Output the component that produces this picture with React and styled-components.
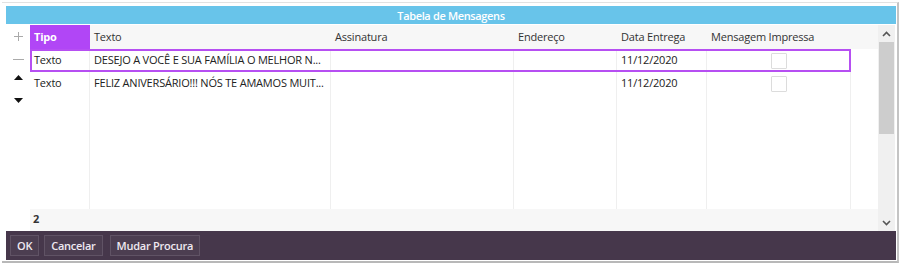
import React from 'react'
import styled, { createGlobalStyle } from 'styled-components'

const Global = createGlobalStyle`
  html, body { margin: 0; padding: 0; background: #fff; }
  body { font-family: "Open Sans", "Noto Sans", sans-serif; letter-spacing: -0.2px; }
`

const Page = styled.div`
  width: 900px;
  height: 266px;
  box-sizing: border-box;
  padding: 2px 1px 3px 2px;
`

const Frame = styled.div`
  height: 100%;
  box-sizing: border-box;
  border-top: 1px solid #e2e2e2;
  border-right: 2px solid #c4c4c4;
  border-bottom: 2px solid #b8b8b8;
  padding: 3px 1px 1px 4px;
  display: flex;
  flex-direction: column;
`

const Title = styled.div`
  height: 18px;
  background: #68c4ea;
  color: #fff;
  font-size: 11px;
  font-weight: 600;
  letter-spacing: -0.35px;
  display: flex;
  align-items: center;
  justify-content: center;
`

const Main = styled.div`
  flex: 1;
  display: flex;
  padding-top: 1px;
`

const Gutter = styled.div`
  width: 24px;
  display: flex;
  flex-direction: column;
  align-items: center;
`

const GutterBtn = styled.div`
  height: ${p => p.$h || 23}px;
  display: flex;
  align-items: center;
  justify-content: center;
`

const Table = styled.div`
  width: 848px;
  display: flex;
  flex-direction: column;
`

const cols = '60px 241px 183px 103px 90px 144px 27px'

const HeadRow = styled.div`
  display: grid;
  grid-template-columns: ${cols};
  height: 24px;
  background: #f7f7f7;
`

const HeadCell = styled.div`
  display: flex;
  align-items: center;
  padding-left: 4px;
  padding-bottom: 1px;
  font-size: 11px;
  color: ${p => p.$active ? '#fff' : '#333'};
  background: ${p => p.$active ? '#b146f6' : 'transparent'};
  font-weight: ${p => p.$active ? 700 : 400};
`

const Body = styled.div`
  flex: 1;
  position: relative;
  display: flex;
  flex-direction: column;
`

const Lines = styled.div`
  position: absolute;
  inset: 0;
  display: grid;
  grid-template-columns: ${cols};
  pointer-events: none;
`

const Line = styled.div`
  border-right: 1px solid #efefef;
  &:last-child { border-right: none; }
`

const Row = styled.div`
  position: relative;
  display: grid;
  grid-template-columns: ${cols};
  height: 23px;
`

const Outline = styled.div`
  position: absolute;
  left: 0;
  top: 0;
  width: 821px;
  height: 23px;
  box-sizing: border-box;
  border: 2px solid #b64ff2;
`

const Cell = styled.div`
  display: flex;
  align-items: center;
  justify-content: ${p => p.$center ? 'center' : 'flex-start'};
  padding-left: ${p => p.$center ? 0 : 4}px;
  padding-bottom: 2px;
  font-size: 11px;
  color: #222;
  white-space: nowrap;
  overflow: hidden;
`

const Check = styled.div`
  width: 14px;
  height: 14px;
  border: 1px solid #dcdcdc;
  border-radius: 1px;
  background: #fff;
  margin-top: 3px;
`

const Footer = styled.div`
  height: 22px;
  background: #f7f7f7;
  display: flex;
  align-items: center;
  padding-left: 3px;
  padding-bottom: 3px;
  box-sizing: border-box;
  font-size: 11px;
  font-weight: 700;
  color: #333;
`

const Scroll = styled.div`
  width: 17px;
  background: #f0f0f0;
  display: flex;
  flex-direction: column;
`

const Arrow = styled.div`
  height: 17px;
  display: flex;
  align-items: center;
  justify-content: center;
`

const Track = styled.div`
  flex: 1;
  padding: 0 1px;
`

const Thumb = styled.div`
  height: 92px;
  background: #cdcdcd;
`

const Bar = styled.div`
  height: 29px;
  background: #46374b;
  display: flex;
  align-items: center;
  gap: 5px;
  padding-left: 4px;
`

const Button = styled.div`
  height: 21px;
  padding: 0 6px;
  box-sizing: border-box;
  display: flex;
  align-items: center;
  background: #4c3e51;
  border: 1px solid #605365;
  color: #efe9f0;
  font-size: 11px;
  font-weight: 600;
  letter-spacing: -0.25px;
  margin-left: ${p => p.$wide ? 2 : 0}px;
`

const Chevron = ({ up }) => (
  <svg width="9" height="6" viewBox="0 0 9 6">
    <path d={up ? 'M1 5 L4.5 1.5 L8 5' : 'M1 1 L4.5 4.5 L8 1'} fill="none" stroke="#555" strokeWidth="1.6" />
  </svg>
)

const rows = [
  { tipo: 'Texto', texto: 'DESEJO A VOCÊ E SUA FAMÍLIA O MELHOR N...', data: '11/12/2020', sel: true },
  { tipo: 'Texto', texto: 'FELIZ ANIVERSÁRIO!!! NÓS TE AMAMOS MUIT...', data: '11/12/2020' },
]

const headers = ['Tipo', 'Texto', 'Assinatura', 'Endereço', 'Data Entrega', 'Mensagem Impressa', '']

export default function App() {
  return (
    <Page>
      <Global />
      <Frame>
        <Title>Tabela de Mensagens</Title>
        <Main>
          <Gutter>
            <GutterBtn>
              <svg width="9" height="9" viewBox="0 0 9 9"><path d="M4.5 0 V9 M0 4.5 H9" stroke="#aaa" strokeWidth="1" /></svg>
            </GutterBtn>
            <GutterBtn>
              <svg width="11" height="3" viewBox="0 0 11 3"><path d="M0 1.5 H11" stroke="#aaa" strokeWidth="1" /></svg>
            </GutterBtn>
            <GutterBtn $h={12}>
              <svg width="9" height="5" viewBox="0 0 9 5"><path d="M0 5 L4.5 0 L9 5 Z" fill="#111" /></svg>
            </GutterBtn>
            <GutterBtn $h={34}>
              <svg width="9" height="5" viewBox="0 0 9 5"><path d="M0 0 L4.5 5 L9 0 Z" fill="#111" /></svg>
            </GutterBtn>
          </Gutter>
          <Table>
            <HeadRow>
              {headers.map((h, i) => (
                <HeadCell key={i} $active={i === 0}>{h}</HeadCell>
              ))}
            </HeadRow>
            <Body>
              <Lines>
                {headers.map((h, i) => <Line key={i} />)}
              </Lines>
              {rows.map((r, i) => (
                <Row key={i}>
                  <Cell>{r.tipo}</Cell>
                  <Cell>{r.texto}</Cell>
                  <Cell />
                  <Cell />
                  <Cell>{r.data}</Cell>
                  <Cell $center><Check /></Cell>
                  <Cell />
                  {r.sel && <Outline />}
                </Row>
              ))}
            </Body>
            <Footer>2</Footer>
          </Table>
          <Scroll>
            <Arrow><Chevron up /></Arrow>
            <Track><Thumb /></Track>
            <Arrow><Chevron /></Arrow>
          </Scroll>
        </Main>
        <Bar>
          <Button>OK</Button>
          <Button>Cancelar</Button>
          <Button $wide>Mudar Procura</Button>
        </Bar>
      </Frame>
    </Page>
  )
}
